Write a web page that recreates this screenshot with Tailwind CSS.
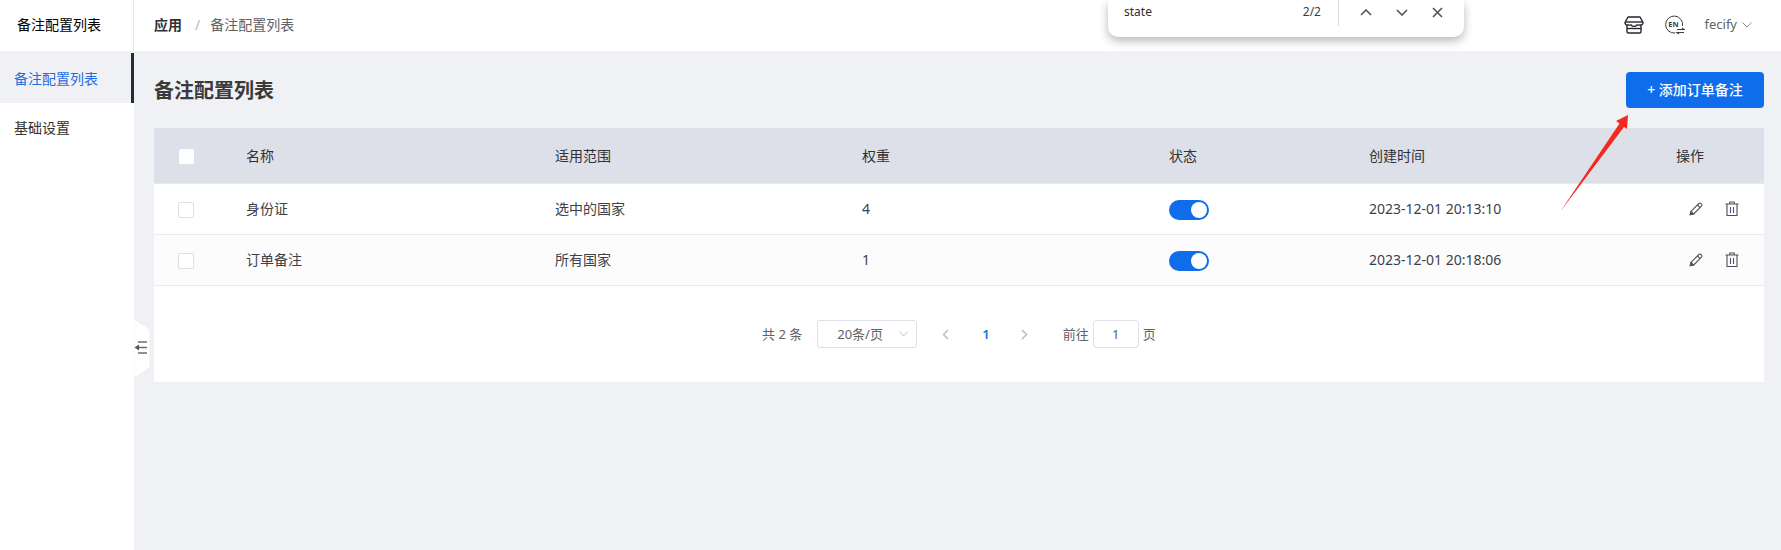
<!DOCTYPE html>
<html lang="zh-CN">
<head>
  <meta charset="UTF-8" />
  <title>备注配置列表</title>
  <script src="https://cdn.jsdelivr.net/npm/@tailwindcss/browser@4"></script>
</head>
<body class="font-['Noto_Sans','Noto_Sans_CJK_SC',sans-serif] text-sm text-[#303133]">
  <div class="relative flex h-[550px] w-[1781px] overflow-hidden bg-[#f0f1f5]">

    <!-- sidebar -->
    <aside class="w-[134px] shrink-0 bg-white">
      <div class="flex h-[51px] items-center border-r border-[#e8e9ee] pb-[2px] pl-[17px] text-black">备注配置列表</div>
      <div class="flex h-[52px] items-center bg-[#f0f1f5] pl-[14px] pt-[3px] text-[#1f6fe0]">备注配置列表</div>
      <div class="flex h-[50px] items-center pl-[14px] text-[#303133]">基础设置</div>
    </aside>

    <div class="flex min-w-0 flex-1 flex-col">
      <!-- header -->
      <header class="flex h-[51px] shrink-0 items-center bg-white pb-[2px] pl-[20px] pr-[29px]">
        <span class="font-semibold text-[#303133]">应用</span>
        <span class="ml-[13px] text-[#b4b7bd]">/</span>
        <span class="ml-[10px] text-[#606266]">备注配置列表</span>
        <div class="ml-auto flex items-center">
          <svg class="h-[18px] w-[20px]" viewBox="0 0 20 18" fill="none" stroke="#23262d" stroke-width="1.4" stroke-linejoin="round">
            <path d="M4 1h12l3 5.500a2.200 2.200 0 0 1-3 2.300 3.500 3.500 0 0 1-3 0 3.600 3.600 0 0 1-6 0 3.500 3.500 0 0 1-3 0 2.200 2.200 0 0 1-3-2.300z" />
            <path d="M1.500 6h17" />
            <path d="M3 9v6.500a1.500 1.500 0 0 0 1.500 1.500h11a1.500 1.500 0 0 0 1.500-1.500V9" />
            <path d="M3 12.500h14" />
          </svg>
          <svg class="ml-[21px] h-[20px] w-[20px]" viewBox="0 0 20 20" fill="none" stroke="#3a3d44" stroke-width="1">
            <path d="M17.500 11A8.500 8.500 0 1 0 10 18" />
            <path d="M12 14.500h7l-2-1.500M19 17.500h-7l2 1.500" stroke-width="1.100" />
            <text x="3.200" y="11.800" font-size="7.500" font-weight="700" fill="#3a3d44" stroke="none">EN</text>
          </svg>
          <span class="ml-[19px] text-[13px] text-[#606266]">fecify</span>
          <svg class="ml-[5px] h-[6px] w-[10px]" viewBox="0 0 10 6" fill="none" stroke="#8a8d93" stroke-width="1"><path d="M.5.500 5 5 9.500.500" /></svg>
        </div>
      </header>

      <main class="px-[20px] pr-[17px]">
        <div class="flex h-[77px] items-center justify-between pt-[3px]">
          <h1 class="text-[20px] font-bold text-[#3a3a3a]">备注配置列表</h1>
          <button class="mb-[3px] h-[36px] w-[138px] rounded-[4px] bg-[#0f6ceb] text-[14px] font-medium text-white">+ 添加订单备注</button>
        </div>

        <div class="bg-white">
          <!-- table head -->
          <div class="grid h-[56px] grid-cols-[92px_309px_307px_307px_200px_307px_88px] items-center border-b border-[#e8e9ee] bg-[#dee0e9] text-[#303133]">
            <span class="ml-[25px] mt-[2px] h-[15px] w-[15px] rounded-[2px] bg-white"></span>
            <span>名称</span><span>适用范围</span><span>权重</span><span>状态</span><span>创建时间</span><span>操作</span>
          </div>

          <!-- rows -->
          <div class="grid h-[51px] grid-cols-[92px_309px_307px_307px_200px_307px_88px] items-center border-b border-[#e9eaef] bg-white text-[#3d4048]">
            <span class="ml-[24px] mt-[1px] h-[16px] w-[16px] rounded-[2px] border border-[#dcdfe6] bg-white"></span>
            <span>身份证</span><span>选中的国家</span><span>4</span>
            <span class="relative mt-[2px] h-[20px] w-[40px] rounded-full bg-[#0f6ceb]"><span class="absolute right-[2px] top-[2px] h-[16px] w-[16px] rounded-full bg-white"></span></span>
            <span>2023-12-01 20:13:10</span>
            <span class="flex items-center gap-[22px] pb-[1px] pl-[13px]">
              <svg class="h-[14px] w-[14px]" viewBox="0 0 14 14" fill="none" stroke="#55585f" stroke-width="1.1" stroke-linejoin="round"><path d="M1.200 12.800 2 9.300 9.800 1.500a1.400 1.400 0 0 1 2 0l.7.7a1.400 1.400 0 0 1 0 2L4.700 12z" /><path d="m8.500 3 2.500 2.500" /><path d="M1.200 12.800 2 9.300 4.700 12z" fill="#55585f" /></svg>
              <svg class="h-[15px] w-[14px]" viewBox="0 0 14 15" fill="none" stroke="#4b4e55" stroke-width="1.1"><path d="M.5 3h13M4.800 3V1h4.400v2M2 3v11.500h10V3" /><path d="M5.500 6v6M8.500 6v6" stroke="#5d4b75" /></svg>
            </span>
          </div>
          <div class="grid h-[51px] grid-cols-[92px_309px_307px_307px_200px_307px_88px] items-center border-b border-[#e9eaef] bg-[#fcfcfd] text-[#3d4048]">
            <span class="ml-[24px] mt-[1px] h-[16px] w-[16px] rounded-[2px] border border-[#dcdfe6] bg-white"></span>
            <span>订单备注</span><span>所有国家</span><span>1</span>
            <span class="relative mt-[2px] h-[20px] w-[40px] rounded-full bg-[#0f6ceb]"><span class="absolute right-[2px] top-[2px] h-[16px] w-[16px] rounded-full bg-white"></span></span>
            <span>2023-12-01 20:18:06</span>
            <span class="flex items-center gap-[22px] pb-[1px] pl-[13px]">
              <svg class="h-[14px] w-[14px]" viewBox="0 0 14 14" fill="none" stroke="#55585f" stroke-width="1.1" stroke-linejoin="round"><path d="M1.200 12.800 2 9.300 9.800 1.500a1.400 1.400 0 0 1 2 0l.7.7a1.400 1.400 0 0 1 0 2L4.700 12z" /><path d="m8.500 3 2.500 2.500" /><path d="M1.200 12.800 2 9.300 4.700 12z" fill="#55585f" /></svg>
              <svg class="h-[15px] w-[14px]" viewBox="0 0 14 15" fill="none" stroke="#4b4e55" stroke-width="1.1"><path d="M.5 3h13M4.800 3V1h4.400v2M2 3v11.500h10V3" /><path d="M5.500 6v6M8.500 6v6" stroke="#5d4b75" /></svg>
            </span>
          </div>

          <!-- pagination -->
          <div class="flex h-[96px] items-center pl-[608px] text-[13px] text-[#606266]">
            <span>共 2 条</span>
            <div class="relative ml-[15px] flex h-[28px] w-[100px] items-center rounded-[3px] border border-[#dcdfe6] pl-[19px]">20条/页
              <svg class="absolute right-[8px] top-[10px] h-[6px] w-[9px]" viewBox="0 0 9 6" fill="none" stroke="#c0c4cc" stroke-width="1"><path d="M.5.500 4.500 5 8.500.500" /></svg>
            </div>
            <svg class="ml-[25px] h-[11px] w-[7px]" viewBox="0 0 7 11" fill="none" stroke="#b8bcc4" stroke-width="1.5"><path d="M6 1 1.500 5.500 6 10" /></svg>
            <span class="ml-[33px] font-semibold text-[#1f6fe0]">1</span>
            <svg class="ml-[31px] h-[11px] w-[7px]" viewBox="0 0 7 11" fill="none" stroke="#b8bcc4" stroke-width="1.5"><path d="M1 1l4.500 4.500L1 10" /></svg>
            <span class="ml-[35px]">前往</span>
            <div class="ml-[4px] flex h-[28px] w-[46px] items-center justify-center rounded-[4px] border border-[#dcdfe6]">1</div>
            <span class="ml-[4px]">页</span>
          </div>
        </div>
      </main>
    </div>

    <!-- active nav bar -->
    <div class="absolute left-[131px] top-[53px] h-[50px] w-[3px] bg-[#232a3a]"></div>

    <!-- collapse tab -->
    <svg class="absolute left-[134px] top-[319px] h-[59px] w-[17px]" viewBox="0 0 17 59">
      <path d="M0 0 14 9q2 1.500 2 4v33q0 2.500-2 4L0 59z" fill="#fff" stroke="#e8e9ee" stroke-width=".6" />
      <path d="M4 23h9M5 28.500h8M4 34h9" stroke="#6b6e75" stroke-width="1.4" fill="none" />
      <path d="M.5 28.500 5 25.500v6z" fill="#55585f" />
    </svg>

    <!-- browser find bar -->
    <div class="absolute left-[1108px] top-0 flex h-[37px] w-[356px] items-center rounded-b-[10px] bg-white pb-[13px] pl-[16px] pr-[21px] text-[12px] text-[#2f3033] shadow-[0_4px_10px_rgba(0,0,0,0.28)]">
      <span>state</span>
      <span class="ml-auto text-[#3c3d40]">2/2</span>
      <span class="ml-[17px] h-[27px] w-px bg-[#dadde3]"></span>
      <svg class="ml-[21px] h-[7px] w-[12px]" viewBox="0 0 12 7" fill="none" stroke="#555" stroke-width="1.6"><path d="M1 6l5-5 5 5" /></svg>
      <svg class="ml-[24px] h-[7px] w-[12px]" viewBox="0 0 12 7" fill="none" stroke="#555" stroke-width="1.6"><path d="M1 1l5 5 5-5" /></svg>
      <svg class="ml-[24px] h-[11px] w-[11px]" viewBox="0 0 11 11" fill="none" stroke="#555" stroke-width="1.6"><path d="M1 1l9 9M10 1l-9 9" /></svg>
    </div>

    <!-- red annotation arrow -->
    <svg class="absolute left-[1555px] top-[110px] h-[110px] w-[80px]" viewBox="0 0 80 110">
      <path d="M5 102 64.500 13.500 61 11 73 5 72 19 69 17z" fill="#f22a20" />
    </svg>
  </div>
</body>
</html>
